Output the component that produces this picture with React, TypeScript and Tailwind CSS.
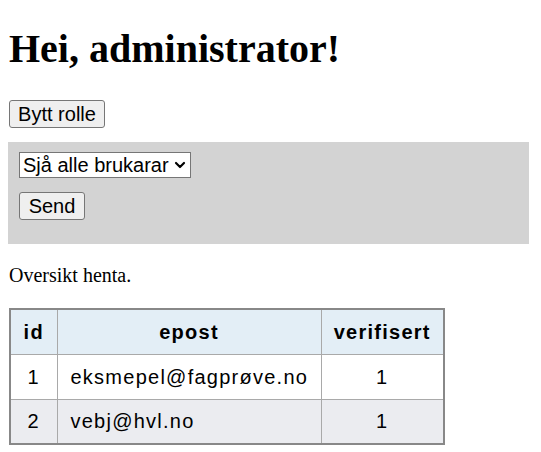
import { ChevronDown } from 'lucide-react'

const users = [
  { id: 1, epost: 'eksmepel@fagprøve.no', verifisert: 1 },
  { id: 2, epost: 'vebj@hvl.no', verifisert: 1 },
]

const sans = "font-['Liberation_Sans',Arial,sans-serif]"

export default function App() {
  return (
    <div className="min-h-screen bg-white px-[8px] pt-[26px] font-['Liberation_Serif','Times_New_Roman',serif] text-black">
      <h1 className="ml-[1px] text-[40px] font-bold leading-[46px]">
        Hei, administrator!
      </h1>

      <button
        className={`${sans} mt-[28px] ml-[1px] block h-[28px] w-[96px] rounded-[3px] border border-[#767676] bg-[#efefef] text-[20px] leading-[23px]`}
      >
        Bytt rolle
      </button>

      <div className="mt-[14px] h-[102px] w-[521px] bg-[#d3d3d3] pl-[11px] pt-[10px]">
        <div
          className={`${sans} relative flex h-[26px] w-[172px] items-center border border-[#767676] bg-white pl-[3px] text-[20px] leading-[23px]`}
        >
          <span>Sjå alle brukarar</span>
          <ChevronDown
            className="absolute right-[2px] top-[4px] h-[16px] w-[16px]"
            strokeWidth={3.2}
          />
        </div>
        <button
          className={`${sans} mt-[14px] block h-[28px] w-[66px] rounded-[3px] border border-[#767676] bg-[#efefef] text-[20px] leading-[23px]`}
        >
          Send
        </button>
      </div>

      <p className="mt-[20px] ml-[1px] text-[20px] leading-[23px]">
        Oversikt henta.
      </p>

      <table
        className={`${sans} mt-[21px] ml-[1px] border-collapse border-2 border-[#888888] text-[20px] tracking-[1.25px]`}
      >
        <thead>
          <tr className="h-[45px] bg-[#e3eef6]">
            <th className="w-[47px] border border-[#a9a9a9] font-bold">id</th>
            <th className="w-[264px] border border-[#a9a9a9] font-bold">epost</th>
            <th className="w-[123px] border border-[#a9a9a9] font-bold">
              verifisert
            </th>
          </tr>
        </thead>
        <tbody>
          {users.map((u, i) => (
            <tr
              key={u.id}
              className={`h-[45px] ${i % 2 === 1 ? 'bg-[#ebecf0]' : 'bg-white'}`}
            >
              <td className="border border-[#a9a9a9] text-center">{u.id}</td>
              <td className="border border-[#a9a9a9] pl-[13px]">{u.epost}</td>
              <td className="border border-[#a9a9a9] text-center">
                {u.verifisert}
              </td>
            </tr>
          ))}
        </tbody>
      </table>
    </div>
  )
}
